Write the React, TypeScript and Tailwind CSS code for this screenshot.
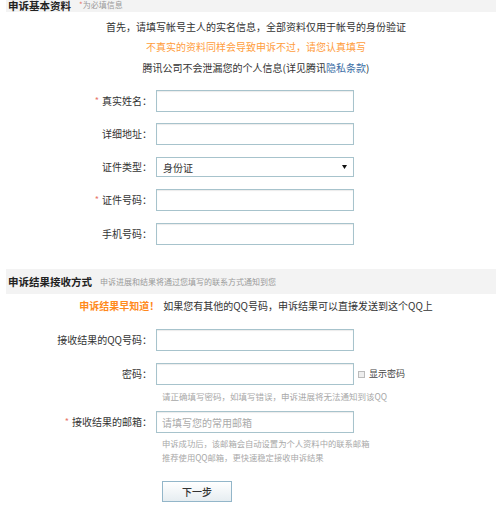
import React from "react";

const field =
	"h-[22px] w-[198px] border border-[#a7c3cc] bg-white shadow-[inset_0_1px_1px_rgba(0,0,0,0.08)] px-[5px] text-[10px] text-[#333] outline-none";

function Label({ text, required }: { text: string; required?: boolean }) {
	return (
		<div className="flex w-[152px] shrink-0 items-center justify-end text-[10px] leading-[12px] text-[#333]">
			{required && <span className="mr-[3px] text-[9px] text-[#e8776a]">*</span>}
			<span>{text}</span>
		</div>
	);
}

function Row({
	label,
	required,
	className = "",
	children,
}: {
	label: string;
	required?: boolean;
	className?: string;
	children: React.ReactNode;
}) {
	return (
		<div className={`flex items-center ${className}`}>
			<Label text={label} required={required} />
			<div className="ml-[4px] flex items-center">{children}</div>
		</div>
	);
}

function SectionBar({
	title,
	note,
	className = "",
}: {
	title: string;
	note: React.ReactNode;
	className?: string;
}) {
	return (
		<div className={`ml-[6px] flex items-center bg-[#f3f3f3] pl-[2px] ${className}`}>
			<span className="text-[10.5px] font-bold leading-[12px] text-[#222]">{title}</span>
			<span className="ml-[8px] text-[8px] leading-[10px] text-[#9a9a9a]">{note}</span>
		</div>
	);
}

export default function App() {
	return (
		<div className="h-[509px] w-[496px] overflow-hidden bg-white font-['Noto_Sans_CJK_SC',sans-serif] text-[#333]">
			<SectionBar
				title="申诉基本资料"
				className="h-[12px] items-start"
				note={
					<>
						<span className="text-[#e8776a]">*</span>为必填信息
					</>
				}
			/>

			<div className="ml-[16px] flex flex-col items-center text-[10px] leading-[10px]">
				<p className="mt-[10px]">首先，请填写帐号主人的实名信息，全部资料仅用于帐号的身份验证</p>
				<p className="mt-[10px] text-[#ff9d3c]">不真实的资料同样会导致申诉不过，请您认真填写</p>
				<p className="mt-[11px]">
					腾讯公司不会泄漏您的个人信息(详见腾讯<span className="text-[#3b6ea5]">隐私条款</span>)
				</p>
			</div>

			<Row label="真实姓名：" required className="mt-[17px]">
				<input className={field} />
			</Row>
			<Row label="详细地址：" className="mt-[11px]">
				<input className={field} />
			</Row>
			<Row label="证件类型：" className="mt-[12px]">
				<div className="flex h-[20px] w-[198px] items-center justify-between border border-[#a7c3cc] bg-white pl-[6px] pr-[6px] text-[10px]">
					<span>身份证</span>
					<svg width="5" height="4" viewBox="0 0 5 4">
						<path d="M0 0h5L2.5 4z" fill="#111" />
					</svg>
				</div>
			</Row>
			<Row label="证件号码：" required className="mt-[12px]">
				<input className={`${field} h-[21px]`} />
			</Row>
			<Row label="手机号码：" className="mt-[12px]">
				<input className={`${field} h-[21px]`} />
			</Row>

			<SectionBar
				title="申诉结果接收方式"
				className="mt-[24px] h-[25px]"
				note="申诉进展和结果将通过您填写的联系方式通知到您"
			/>

			<div className="ml-[16px] mt-[7px] flex justify-center text-[10px] leading-[10px]">
				<span className="font-bold text-[#ff8a1c]">申诉结果早知道！</span>
				<span className="ml-[4px]">如果您有其他的QQ号码，申诉结果可以直接发送到这个QQ上</span>
			</div>

			<Row label="接收结果的QQ号码：" className="mt-[18px]">
				<input className={`${field} h-[21px]`} />
			</Row>
			<Row label="密码：" className="mt-[12px]">
				<input type="password" className={field} />
				<span className="ml-[4px] h-[7px] w-[7px] border border-[#bbb] bg-[#eee]" />
				<span className="ml-[4px] text-[9px] text-[#444]">显示密码</span>
			</Row>
			<p className="ml-[162px] mt-[7px] text-[8.5px] leading-[9px] text-[#a8a8a8]">
				请正确填写密码，如填写错误，申诉进展将无法通知到该QQ
			</p>

			<Row label="接收结果的邮箱：" required className="mt-[10px]">
				<input className={`${field} h-[21px] placeholder:text-[#aaa]`} placeholder="请填写您的常用邮箱" />
			</Row>
			<p className="ml-[162px] mt-[6px] text-[8.3px] leading-[9px] text-[#a8a8a8]">
				申诉成功后，该邮箱会自动设置为个人资料中的联系邮箱
			</p>
			<p className="ml-[162px] mt-[5px] text-[8.3px] leading-[9px] text-[#a8a8a8]">
				推荐使用QQ邮箱，更快速稳定接收申诉结果
			</p>

			<button className="ml-[162px] mt-[19px] h-[21px] w-[70px] border border-[#93b6c9] bg-gradient-to-b from-white to-[#e6edf1] text-[10px] font-medium text-[#333]">
				下一步
			</button>
		</div>
	);
}
